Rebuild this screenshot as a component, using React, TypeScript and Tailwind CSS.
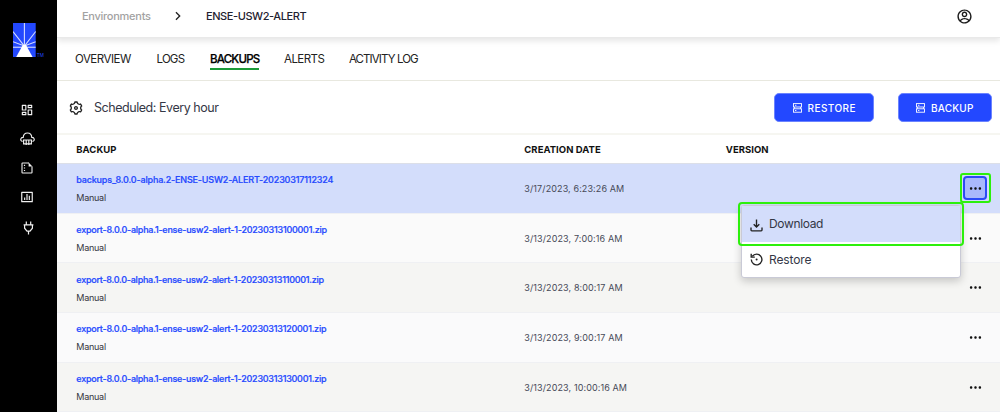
import {
  RiAccountCircleLine,
  RiArrowRightSLine,
  RiBarChartBoxLine,
  RiDashboardLine,
  RiMoreFill,
  RiSettings3Line,
} from "react-icons/ri";

const backups = [
  { name: "backups_8.0.0-alpha.2-ENSE-USW2-ALERT-20230317112324", tracking: "tracking-[-0.17px]", date: "3/17/2023, 6:23:26 AM", bg: "bg-[#d3ddfb]", open: true },
  { name: "export-8.0.0-alpha.1-ense-usw2-alert-1-20230313100001.zip", tracking: "tracking-[-0.24px]", date: "3/13/2023, 7:00:16 AM", bg: "bg-[#fafafa]" },
  { name: "export-8.0.0-alpha.1-ense-usw2-alert-1-20230313110001.zip", tracking: "tracking-[-0.255px]", date: "3/13/2023, 8:00:17 AM", bg: "bg-[#f5f5f3]" },
  { name: "export-8.0.0-alpha.1-ense-usw2-alert-1-20230313120001.zip", tracking: "tracking-[-0.245px]", date: "3/13/2023, 9:00:17 AM", bg: "bg-[#fafafb]" },
  { name: "export-8.0.0-alpha.1-ense-usw2-alert-1-20230313130001.zip", tracking: "tracking-[-0.245px]", date: "3/13/2023, 10:00:16 AM", bg: "bg-[#f5f5f3]" },
];

function Logo() {
  return (
    <svg width="32" height="34" viewBox="0 0 32 34" className="shrink-0">
      <rect width="22.7" height="34" fill="#2348ff" />
      <g stroke="#fff" strokeWidth="1.1" opacity="0.8">
        <path d="M11.4 0V24M0 8.5L11.4 23L22.7 8.5M0 18.7L11.4 23L22.7 18.7" fill="none" />
        <path d="M0 24.3H22.7" strokeWidth="1.4" opacity="0.8" />
      </g>
      <path d="M9.8 22h3.2l6.6 12H3.2z" fill="#fff" />
      <text x="23.8" y="33.6" fontSize="4.5" fill="#2348ff" fontFamily="Inter, sans-serif">TM</text>
    </svg>
  );
}

function CloudIcon() {
  return (
    <svg width="15" height="14" viewBox="0 0 15 14" fill="none" stroke="#f0f0f0" strokeWidth="1.15">
      <path d="M2.6 9.4C1 9.1.6 7.9.8 7 1 6 2 5.5 3.2 5.4 3.4 2.6 5.1 1 7.5 1s4.1 1.6 4.3 4.4c1.2.1 2.2.6 2.4 1.6.2.9-.2 2.1-1.8 2.4" />
      <path d="M3 8h9M3.6 8v3.8h7.8V8M6.2 8v5M8.8 8v5" />
    </svg>
  );
}

function NoteIcon() {
  return (
    <svg width="12" height="12" viewBox="0 0 12 12" fill="none" stroke="#f0f0f0">
      <path d="M8 1H1.6a.6.6 0 0 0-.6.6v8.8c0 .3.3.6.6.6h8.8c.3 0 .6-.3.6-.6V4.5" strokeWidth="1.1" />
      <path d="M7.6.5 11.5 4.6H7.6z" fill="#f0f0f0" stroke="none" />
      <path d="M3.5 2.8v1.1M3.5 5.4v1.1M3.5 8v1.1" strokeWidth="1.2" />
    </svg>
  );
}

function PlugIcon() {
  return (
    <svg width="11" height="14" viewBox="0 0 11 14" fill="none" stroke="#f0f0f0" strokeWidth="1.2">
      <path d="M3.3.6v3M7.7.6v3M.6 3.8h9.8M1.6 3.8v3.4l2.4 3h3l2.4-3V3.8M5.5 10.2v3.4" />
    </svg>
  );
}

function ServerIcon() {
  return (
    <svg width="9" height="10" viewBox="0 0 9 10" fill="none" stroke="#fff" strokeWidth="0.9" className="mr-[6px] shrink-0">
      <rect x="0.5" y="0.6" width="8" height="3.4" />
      <rect x="0.5" y="5.8" width="8" height="3.4" />
      <path d="M2 2.3h1.4M2 7.5h1.4M1.4 4v1.8M7.6 4v1.8" />
    </svg>
  );
}

function DownloadIcon() {
  return (
    <svg width="13" height="13" viewBox="0 0 13 13" fill="none" stroke="#222" strokeWidth="1.35">
      <path d="M6.5.6v7.2M3.7 5.2l2.8 2.8 2.8-2.8" />
      <path d="M1 8.6v2.5c0 .5.4.8.8.8h9.4c.5 0 .8-.3.8-.8V8.6" />
    </svg>
  );
}

function RestoreIcon() {
  return (
    <svg width="13" height="13" viewBox="0 0 13 13" fill="none" stroke="#222" strokeWidth="1.35">
      <path d="M2.3 3.4A5.3 5.3 0 1 1 1.3 6.6" />
      <path d="M1.2.7v3.4h3.6" />
      <circle cx="6.6" cy="6.6" r="1" fill="#222" stroke="none" />
    </svg>
  );
}

function Sidebar() {
  return (
    <aside className="flex w-[57px] shrink-0 flex-col bg-black pt-[23px] text-[#f0f0f0]">
      <div className="flex pl-[13px]">
        <Logo />
      </div>
      <nav className="mt-[38.5px] flex flex-col items-center pr-[3px]">
        <span className="flex h-[29px] items-center"><RiDashboardLine size={14} /></span>
        <span className="flex h-[29px] items-center"><CloudIcon /></span>
        <span className="flex h-[29px] items-center"><NoteIcon /></span>
        <span className="flex h-[29px] items-center"><RiBarChartBoxLine size={14} /></span>
        <span className="flex h-[32px] items-center pl-[2px]"><PlugIcon /></span>
      </nav>
    </aside>
  );
}

function Header() {
  return (
    <header className="flex h-[38px] shrink-0 items-center border-b border-[#e9e9e9] bg-white pr-[27px] pb-[5px] pl-[25px] text-[11px] font-medium whitespace-nowrap shadow-[0_3px_6px_rgba(0,0,0,0.10)]">
      <span className="w-[88px] tracking-[-0.27px] text-[#a2a2a2]">Environments</span>
      <RiArrowRightSLine size={16} className="text-[#222]" />
      <span className="ml-[20px] tracking-[-0.42px] text-[#1f2230]">ENSE-USW2-ALERT</span>
      <RiAccountCircleLine size={17} className="ml-auto text-[#1c1c1c]" />
    </header>
  );
}

function Tabs() {
  return (
    <nav className="flex h-[43px] shrink-0 items-center border-b border-[#e8e8df] pt-px pl-[18px] text-[11.5px] whitespace-nowrap text-[#222]">
      <span className="w-[81.5px] tracking-[-0.5px]">OVERVIEW</span>
      <span className="w-[53.5px] tracking-[-0.8px]">LOGS</span>
      <span className="mr-[25px] flex h-[20px] w-[49px] items-center border-b-2 border-[#1c9a38] pt-[2px] font-medium tracking-[-0.8px] text-black [-webkit-text-stroke:0.25px_#000]">BACKUPS</span>
      <span className="w-[65px] tracking-[-0.55px]">ALERTS</span>
      <span className="tracking-[-0.92px]">ACTIVITY LOG</span>
    </nav>
  );
}

function Toolbar() {
  const button = "flex h-[29px] items-center rounded-[5px] border border-[#6b83ff] bg-[#2348ff] text-[10px] font-medium text-white";
  return (
    <div className="flex h-[54px] shrink-0 items-center border-b-2 border-[#f6f6f1] pt-px pr-[8px] pl-[10.5px] whitespace-nowrap">
      <RiSettings3Line size={16} className="text-[#222]" />
      <span className="ml-[10.5px] pt-px text-[12.5px] tracking-[-0.45px] text-[#353846]">Scheduled: Every hour</span>
      <button className={button + " ml-auto w-[100px] pl-[17.5px] tracking-[0.45px]"}>
        <ServerIcon /><span className="pt-px">RESTORE</span>
      </button>
      <button className={button + " ml-[24px] w-[94px] pl-[17px] tracking-[0.2px]"}>
        <ServerIcon /><span className="pt-px">BACKUP</span>
      </button>
    </div>
  );
}

function ActionMenu() {
  return (
    <div className="absolute top-[27px] right-[24px] z-10 w-[220px] rounded-[3px] border border-[#c9cad6] bg-white text-[12px] text-[#343746] shadow-[0_3px_8px_rgba(0,0,0,0.2)]">
      <div className="relative flex h-[36px] items-center bg-[#d3ddfb] pl-[8px]">
        <span className="mt-0.5"><DownloadIcon /></span>
        <span className="ml-[6px] tracking-[-0.35px]">Download</span>
        <span className="absolute -top-[4px] -right-[4px] -bottom-[4px] -left-[4px] rounded-[4px] border-2 border-[#2cf00c]" />
      </div>
      <div className="flex h-[35px] items-center pl-[8px]">
        <RestoreIcon />
        <span className="ml-[6px] tracking-[-0.12px]">Restore</span>
      </div>
    </div>
  );
}

const columns = "grid grid-cols-[448px_201.5px_1fr] pl-[19.3px]";

function BackupTable() {
  return (
    <section className="flex flex-col">
      <div className={columns + " h-[29px] items-center border-b border-[#dcdfe8] pt-[2px] text-[9.5px] font-bold tracking-[0.04px] text-[#111]"}>
        <span>BACKUP</span>
        <span>CREATION DATE</span>
        <span>VERSION</span>
      </div>
      {backups.map((b) => (
        <div key={b.name} className={columns + " h-[49.7px] items-center border-b border-[#eff0f3] text-[9px] " + b.bg}>
          <div className="flex flex-col pt-[2px] whitespace-nowrap">
            <a className={"leading-[18px] font-medium text-[#2348ff] [-webkit-text-stroke:0.2px_#2348ff] " + b.tracking}>{b.name}</a>
            <span className="leading-[18px] tracking-[-0.25px] text-[#343640]">Manual</span>
          </div>
          <span className="pt-px tracking-[0.11px] whitespace-nowrap text-[#464957]">{b.date}</span>
          <div className="flex justify-end pr-[13px]">
            <div className={"relative flex size-[24px] items-center justify-center rounded-[4px] text-[#111] " + (b.open ? "border-2 border-[#2b4bf5] bg-[#a9b8fb]" : "")}>
              <RiMoreFill size={15} className="shrink-0" />
              {b.open && (
                <>
                  <span className="absolute -top-[5px] -right-[6px] -bottom-[5px] -left-[5px] rounded-[3px] border-2 border-[#2cf00c]" />
                  <ActionMenu />
                </>
              )}
            </div>
          </div>
        </div>
      ))}
    </section>
  );
}

export default function App() {
  return (
    <div className="flex h-[412px] w-[1000px] overflow-hidden bg-white font-[Inter,sans-serif]">
      <Sidebar />
      <main className="flex min-w-0 flex-1 flex-col">
        <Header />
        <Tabs />
        <Toolbar />
        <BackupTable />
      </main>
    </div>
  );
}
